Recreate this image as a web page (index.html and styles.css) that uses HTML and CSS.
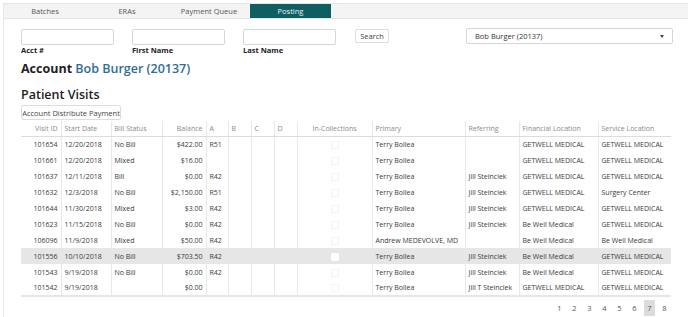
FILE: index.html
```html
<!DOCTYPE html>
<html>
<head>
<meta charset="utf-8">
<link rel="stylesheet" href="styles.css">
</head>
<body>
<div class="page">
  <div class="tabs">
    <div class="tab">Batches</div>
    <div class="tab">ERAs</div>
    <div class="tab">Payment Queue</div>
    <div class="tab active">Posting</div>
  </div>
  <div class="content">
    <div class="search">
      <div class="field"><input class="inp" type="text"><label>Acct #</label></div>
      <div class="field"><input class="inp" type="text"><label>First Name</label></div>
      <div class="field"><input class="inp" type="text"><label>Last Name</label></div>
      <button class="btn search-btn">Search</button>
      <div class="select"><span>Bob Burger (20137)</span><span class="caret"></span></div>
    </div>
    <h1 class="acct">Account <span class="name">Bob Burger (20137)</span></h1>
    <h2 class="visits">Patient Visits</h2>
    <button class="btn dist">Account Distribute Payment</button>
    <table class="grid">
      <colgroup>
        <col style="width:40px"><col style="width:50px"><col style="width:51px"><col style="width:44px">
        <col style="width:22px"><col style="width:23px"><col style="width:23px"><col style="width:23px">
        <col style="width:75px"><col style="width:93px"><col style="width:54px"><col style="width:79px"><col style="width:73px">
      </colgroup>
      <thead>
        <tr>
          <th class="r">Visit ID</th><th>Start Date</th><th>Bill Status</th><th class="r">Balance</th>
          <th>A</th><th>B</th><th>C</th><th>D</th><th class="c">In-Collections</th>
          <th>Primary</th><th>Referring</th><th>Financial Location</th><th>Service Location</th>
        </tr>
      </thead>
      <tbody>
        <tr><td class="r">101654</td><td>12/20/2018</td><td>No Bill</td><td class="r">$422.00</td><td>R51</td><td></td><td></td><td></td><td class="c"><span class="cb"></span></td><td>Terry Bollea</td><td></td><td>GETWELL MEDICAL</td><td>GETWELL MEDICAL</td></tr>
        <tr><td class="r">101661</td><td>12/20/2018</td><td>Mixed</td><td class="r">$16.00</td><td></td><td></td><td></td><td></td><td class="c"><span class="cb"></span></td><td>Terry Bollea</td><td></td><td>GETWELL MEDICAL</td><td>GETWELL MEDICAL</td></tr>
        <tr><td class="r">101637</td><td>12/11/2018</td><td>Bill</td><td class="r">$0.00</td><td>R42</td><td></td><td></td><td></td><td class="c"><span class="cb"></span></td><td>Terry Bollea</td><td>Jill Steinciek</td><td>GETWELL MEDICAL</td><td>GETWELL MEDICAL</td></tr>
        <tr><td class="r">101632</td><td>12/3/2018</td><td>No Bill</td><td class="r">$2,150.00</td><td>R51</td><td></td><td></td><td></td><td class="c"><span class="cb"></span></td><td>Terry Bollea</td><td>Jill Steinciek</td><td>GETWELL MEDICAL</td><td>Surgery Center</td></tr>
        <tr><td class="r">101644</td><td>11/30/2018</td><td>Mixed</td><td class="r">$3.00</td><td>R42</td><td></td><td></td><td></td><td class="c"><span class="cb"></span></td><td>Terry Bollea</td><td>Jill Steinciek</td><td>GETWELL MEDICAL</td><td>GETWELL MEDICAL</td></tr>
        <tr><td class="r">101623</td><td>11/15/2018</td><td>No Bill</td><td class="r">$0.00</td><td>R42</td><td></td><td></td><td></td><td class="c"><span class="cb"></span></td><td>Terry Bollea</td><td>Jill Steinciek</td><td>Be Well Medical</td><td>GETWELL MEDICAL</td></tr>
        <tr><td class="r">106096</td><td>11/9/2018</td><td>Mixed</td><td class="r">$50.00</td><td>R42</td><td></td><td></td><td></td><td class="c"><span class="cb"></span></td><td>Andrew MEDEVOLVE, MD</td><td></td><td>Be Well Medical</td><td>Be Well Medical</td></tr>
        <tr class="hl"><td class="r">101556</td><td>10/10/2018</td><td>No Bill</td><td class="r">$703.50</td><td>R42</td><td></td><td></td><td></td><td class="c"><span class="cb"></span></td><td>Terry Bollea</td><td>Jill Steinciek</td><td>Be Well Medical</td><td>GETWELL MEDICAL</td></tr>
        <tr><td class="r">101543</td><td>9/19/2018</td><td>No Bill</td><td class="r">$0.00</td><td>R42</td><td></td><td></td><td></td><td class="c"><span class="cb"></span></td><td>Terry Bollea</td><td>Jill Steinciek</td><td>Be Well Medical</td><td>GETWELL MEDICAL</td></tr>
        <tr><td class="r">101542</td><td>9/19/2018</td><td></td><td class="r">$0.00</td><td></td><td></td><td></td><td></td><td class="c"><span class="cb"></span></td><td>Terry Bollea</td><td>Jill T Steinciek</td><td>GETWELL MEDICAL</td><td>GETWELL MEDICAL</td></tr>
      </tbody>
    </table>
    <div class="pager">
      <span>1</span><span>2</span><span>3</span><span>4</span><span>5</span><span>6</span><span class="cur">7</span><span>8</span>
    </div>
  </div>
</div>
</body>
</html>
```
FILE: styles.css
```css
* { box-sizing: border-box; }
html, body { margin: 0; padding: 0; background: #fff; }
body { font-family: "Open Sans", "Noto Sans", sans-serif; font-size: 7.5px; color: #333; }
.page { margin: 3px 0 0 3px; border-left: 1px solid #e6e6e6; height: 314px; }
.tabs { display: flex; background: #f4f4f4; border-top: 1px solid #e6e6e6; border-bottom: 1px solid #e6e6e6; height: 16px; }
.tab { width: 82px; text-align: center; line-height: 14px; color: #555; font-size: 7.5px; }
.tab.active { background: #0f5e62; color: #e8f2f2; width: 81px; }
.content { padding: 10px 15px 0 17px; }
.search { display: flex; align-items: flex-start; height: 32px; }
.field { display: flex; flex-direction: column; width: 93px; margin-right: 18px; }
.inp { height: 16px; border: 1px solid #d6d6d6; border-radius: 2px; width: 93px; padding: 0; margin: 0; }
.field label { font-weight: 700; color: #222; font-size: 7.5px; margin-top: 0; line-height: 10px; }
.btn { font-family: inherit; font-size: 7.5px; color: #444; background: #fff; border: 1px solid #ddd; border-radius: 2px; padding: 0; height: 14px; line-height: 12px; }
.search-btn { width: 34px; margin-left: 1px; }
.select { margin-left: 77px; width: 207px; height: 16px; border: 1px solid #d6d6d6; border-radius: 2px; display: flex; align-items: center; justify-content: space-between; padding: 0 8px 0 8px; font-size: 7.5px; color: #333; margin-top: -1px; }
.caret { width: 0; height: 0; border-left: 2.5px solid transparent; border-right: 2.5px solid transparent; border-top: 3px solid #444; }
.acct { font-size: 12.5px; font-weight: 700; margin: 0; line-height: 16px; color: #222; }
.acct .name { color: #2e6d96; font-weight: 600; }
.visits { font-size: 12.5px; font-weight: 600; margin: 10px 0 0 0; line-height: 16px; color: #222; }
.dist { width: 100px; height: 15px; margin-top: 2px; display: block; }
.grid { border-collapse: collapse; table-layout: fixed; width: 650px; margin-top: 1px; }
.grid th { font-weight: 400; color: #8a8a8a; text-align: left; height: 15px; padding: 0 3px; border-left: 1px solid #e8e8e8; border-bottom: 1px solid #dcdcdc; font-size: 7px; white-space: nowrap; overflow: hidden; }
.grid td { height: 16px; padding: 0 3px; border-left: 1px solid #e8e8e8; color: #3a3a3a; font-size: 7px; white-space: nowrap; overflow: hidden; }
.grid th:first-child, .grid td:first-child { border-left: none; }
.grid tbody tr:last-child td { border-bottom: 2px solid #e6e6e6; }
.grid .r { text-align: right; }
.grid .c { text-align: center; }
.grid tr.hl td { background: #e6e6e6; }
.cb { display: inline-block; width: 8px; height: 8px; border: 1px solid #f2f2f2; border-radius: 1px; vertical-align: middle; }
.hl .cb { background: #fff; border-color: #fff; }
.pager { display: flex; justify-content: flex-end; gap: 0; margin-top: 3px; padding-right: 1px; }
.pager span { width: 15px; height: 16px; line-height: 16px; text-align: center; color: #555; font-size: 7.5px; }
.pager .cur { background: #dcdcdc; width: 11px; margin: 0 2px; border-radius: 1px; }
```
